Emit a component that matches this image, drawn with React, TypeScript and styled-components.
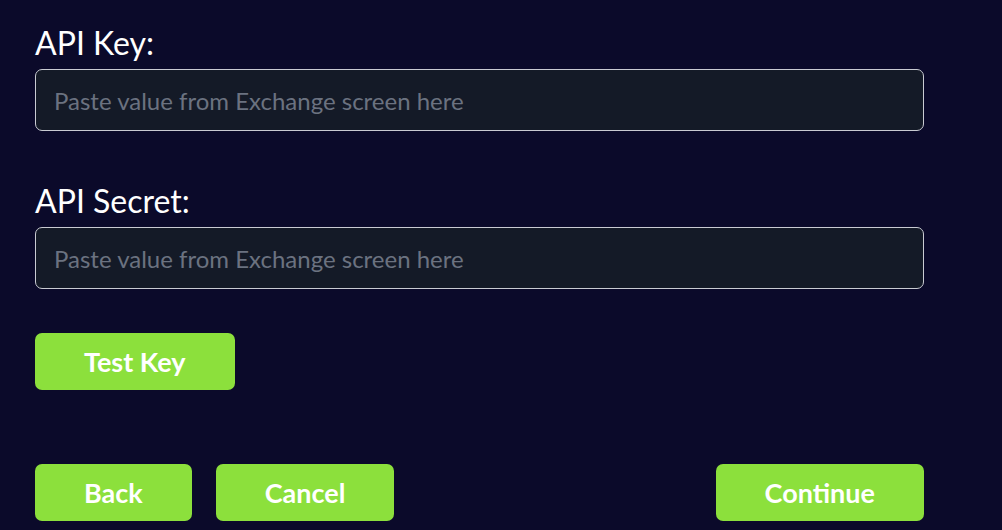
import React from 'react';
import styled, { createGlobalStyle } from 'styled-components';

const GlobalStyle = createGlobalStyle`
  html, body {
    margin: 0;
    padding: 0;
    background-color: #0b0a2a;
    font-family: Lato, "Open Sans", sans-serif;
  }
`;

const App = () => {
  return (
    <Page>
      <GlobalStyle />
      <Form>
        <Field>
          <Label htmlFor="api-key">API Key:</Label>
          <Input id="api-key" type="text" placeholder="Paste value from Exchange screen here" />
        </Field>
        <Field>
          <Label htmlFor="api-secret">API Secret:</Label>
          <Input id="api-secret" type="text" placeholder="Paste value from Exchange screen here" />
        </Field>
        <TestRow>
          <GreenButton>Test Key</GreenButton>
        </TestRow>
        <ButtonBar>
          <ButtonGroup>
            <GreenButton>Back</GreenButton>
            <GreenButton>Cancel</GreenButton>
          </ButtonGroup>
          <GreenButton>Continue</GreenButton>
        </ButtonBar>
      </Form>
    </Page>
  );
};

export default App;

const Page = styled.div`
  min-height: 530px;
  padding: 24px 0 0 35px;
  box-sizing: border-box;
  background-color: #0b0a2a;
`;

const Form = styled.div`
  width: 889px;
  display: flex;
  flex-direction: column;
`;

const Field = styled.div`
  display: flex;
  flex-direction: column;
  gap: 7px;
  margin-bottom: 51px;

  &:nth-child(2) {
    margin-bottom: 44px;
  }
`;

const Label = styled.label`
  font-size: 32px;
  line-height: 38px;
  color: #ffffff;
`;

const Input = styled.input`
  box-sizing: border-box;
  height: 62px;
  width: 100%;
  padding: 0 18px;
  background-color: #141a27;
  border: 1px solid #c9cbd2;
  border-radius: 7px;
  color: #ffffff;
  font-family: Lato, sans-serif;
  font-size: 24px;
  outline: none;

  &::placeholder {
    color: #6b7280;
  }
`;

const TestRow = styled.div`
  display: flex;
  margin-bottom: 74px;
`;

const ButtonBar = styled.div`
  display: flex;
  justify-content: space-between;
`;

const ButtonGroup = styled.div`
  display: flex;
  gap: 24px;
`;

const GreenButton = styled.button`
  height: 57px;
  padding: 0 49px;
  background-color: #8ce03c;
  border: none;
  border-radius: 7px;
  color: #ffffff;
  font-family: Lato, sans-serif;
  font-weight: 700;
  font-size: 27px;
  cursor: pointer;
`;
